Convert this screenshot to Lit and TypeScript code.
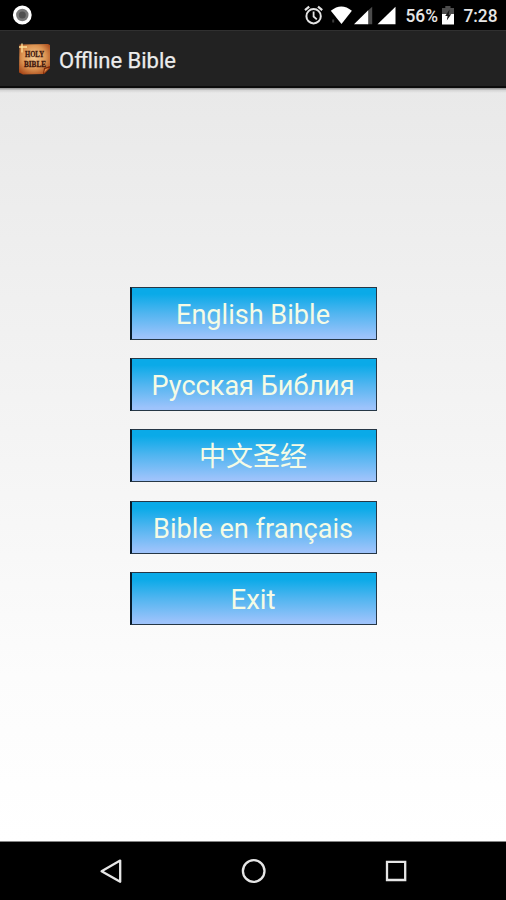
import { LitElement, html, css } from "lit";
import { customElement } from "lit/decorators.js";

@customElement("status-bar")
class StatusBar extends LitElement {
  static styles = css`
    :host {
      display: flex;
      align-items: center;
      height: 30px;
      background: #000;
    }
    svg { display: block; flex: none; overflow: visible; }
    .record { margin-left: 12px; margin-right: auto; }
    .percent { width: 33px; margin-left: 9px; }
    .time { width: 36px; margin: 0 7px 0 7px; }
    text { font: 500 18px Roboto, "Liberation Sans", sans-serif; fill: #e6e6e6; }
  `;
  render() {
    return html`
      <svg class="record" width="20" height="30" viewBox="0 0 20 30">
        <circle cx="10.3" cy="15" r="7.8" fill="#777" stroke="#fff" stroke-width="3.2" />
        <circle cx="10.3" cy="15" r="3.5" fill="#505050" />
      </svg>
      <svg width="92" height="30" viewBox="0 0 92 30">
        <g fill="none" stroke="#e4e4e4" stroke-width="2">
          <circle cx="9.6" cy="16.2" r="7.2" />
          <path d="M1 10.2 5.2 6.6M18.2 10.2 14 6.6" stroke-width="2.2" />
          <path d="M9.6 11.5v5l3.2 2.9" stroke-width="1.8" />
        </g>
        <path d="M26.8 10.8Q37.3 2 47.9 10.8L37.5 24Z" fill="#fff" />
        <path d="M28.2 19.5h2v3h-2z" fill="#3c3c3c" />
        <path d="M63.5 11 68.2 6.8V24.2h-4.7z" fill="#4b4b4b" />
        <path d="M64.2 10.2v14H50z" fill="#fff" />
        <path d="M73.5 24.2 91.5 6.8v17.4z" fill="#fff" />
      </svg>
      <svg class="percent" height="30" viewBox="0 0 33 30"><text x="0.5" y="22" textLength="32.5" lengthAdjust="spacingAndGlyphs">56%</text></svg>
      <svg width="18" height="30" viewBox="0 0 18 30">
        <path d="M7.3 6h5.2v2h3.5v6.5H4V8h3.3z" fill="#4c4c4c" />
        <path d="M4 14h12v10.5H4z" fill="#fff" />
        <path d="M11.6 9.5 7.2 16h2.4L8.8 20.5l4.4-6.2h-2.4z" fill="#161616" />
      </svg>
      <svg class="time" height="30" viewBox="0 0 36 30"><text x="0.5" y="22" textLength="34" lengthAdjust="spacingAndGlyphs">7:28</text></svg>
    `;
  }
}

@customElement("title-bar")
class TitleBar extends LitElement {
  static styles = css`
    :host {
      display: flex;
      align-items: center;
      box-sizing: border-box;
      height: 58px;
      padding-left: 17px;
      background: #222;
      border-top: 1px solid #303030;
      border-bottom: 2px solid #0c0c0c;
    }
    svg { display: block; flex: none; overflow: visible; }
    .icon-word { font: bold 8px "Liberation Serif", serif; fill: #3d160c; stroke: #3d160c; stroke-width: 0.3px; }
    .title { margin-left: 8px; }
    .title text { font: 22.5px Roboto, "Liberation Sans", sans-serif; fill: #ececec; stroke: #ececec; stroke-width: 0.25px; }
  `;
  render() {
    return html`
      <svg width="34" height="34" viewBox="0 0 34 34">
        <defs>
          <radialGradient id="parchment" cx="48%" cy="43%" r="70%">
            <stop offset="0" stop-color="#f6cc92" />
            <stop offset=".55" stop-color="#dc9452" />
            <stop offset="1" stop-color="#a03c10" />
          </radialGradient>
        </defs>
        <path d="M2.5 2.5 31 2l2 1v23l-6 6-21 .5-4-2z" fill="url(#parchment)" />
        <path d="m33 24-6 2-1 6h1l6-6z" fill="#7c2708" />
        <path d="m28 27 4-1-5 5z" fill="#d98442" />
        <path d="M5 1.5v9M2 5h8" stroke="#ffdf98" stroke-width="1.4" />
        <text class="icon-word" x="8" y="14.5" textLength="19" lengthAdjust="spacingAndGlyphs">HOLY</text>
        <text class="icon-word" x="7" y="24.5" textLength="22" lengthAdjust="spacingAndGlyphs">BIBLE</text>
      </svg>
      <svg class="title" width="130" height="36" viewBox="0 0 130 36">
        <text x="0" y="27" textLength="117" lengthAdjust="spacingAndGlyphs">Offline Bible</text>
      </svg>
    `;
  }
}

@customElement("nav-bar")
class NavBar extends LitElement {
  static styles = css`
    :host {
      display: flex;
      justify-content: center;
      gap: 118px;
      box-sizing: border-box;
      height: 59px;
      padding-top: 17px;
      border-top: 1px solid #858585;
      background: #000;
    }
    svg { display: block; flex: none; overflow: visible; fill: none; stroke: #e6e6e6; stroke-width: 2.3; }
  `;
  render() {
    return html`
      <svg width="24" height="26" viewBox="0 0 24 26"><path d="M2.6 12.2 21.2 1.6v21.2z" stroke-linejoin="round" /></svg>
      <svg width="24" height="26" viewBox="0 0 24 26"><circle cx="12.7" cy="12" r="10.8" /></svg>
      <svg width="24" height="26" viewBox="0 0 24 26"><path d="M4 2.8h18.2v18.2H4z" /></svg>
    `;
  }
}

@customElement("app-root")
class AppRoot extends LitElement {
  static styles = css`
    :host {
      display: flex;
      flex-direction: column;
      height: 900px;
      overflow: hidden;
    }
    main {
      flex: 1;
      display: flex;
      flex-direction: column;
      align-items: center;
      gap: 18.2px;
      padding: 199px 0 0 1px;
      background:
        linear-gradient(rgb(0 0 0 / 0.4), rgb(0 0 0 / 0.08) 50%, transparent) 0 0 / 100% 5px no-repeat,
        linear-gradient(#e9e9e9, #f0f0f0 28%, #f5f5f5 50%, #fcfcfc 78%, #fff);
    }
    button {
      box-sizing: border-box;
      width: 247px;
      height: 53px;
      padding: 0;
      border: 1px solid #263746;
      border-left: 2px solid #081b2b;
      border-radius: 0;
      background: linear-gradient(#0aaae8 12%, #51b5f0 50%, #9dc3fb 96%);
    }
    svg { display: block; width: 100%; height: 51px; }
    text {
      font: 27px Roboto, "Noto Sans CJK SC", "Liberation Sans", sans-serif;
      fill: #f5fbe5;
      text-anchor: middle;
    }
  `;
  private choices = [
    { label: "English Bible", width: 154 },
    { label: "Русская Библия", width: 203 },
    { label: "中文圣经", width: 108 },
    { label: "Bible en français", width: 200 },
    { label: "Exit", width: 45 },
  ];
  render() {
    return html`
      <status-bar></status-bar>
      <title-bar></title-bar>
      <main>
        ${this.choices.map((c) => html`
          <button aria-label=${c.label}>
            <svg viewBox="0 0 244 51">
              <text x="121" y="36" textLength=${c.width} lengthAdjust="spacingAndGlyphs">${c.label}</text>
            </svg>
          </button>`)}
      </main>
      <nav-bar></nav-bar>
    `;
  }
}
